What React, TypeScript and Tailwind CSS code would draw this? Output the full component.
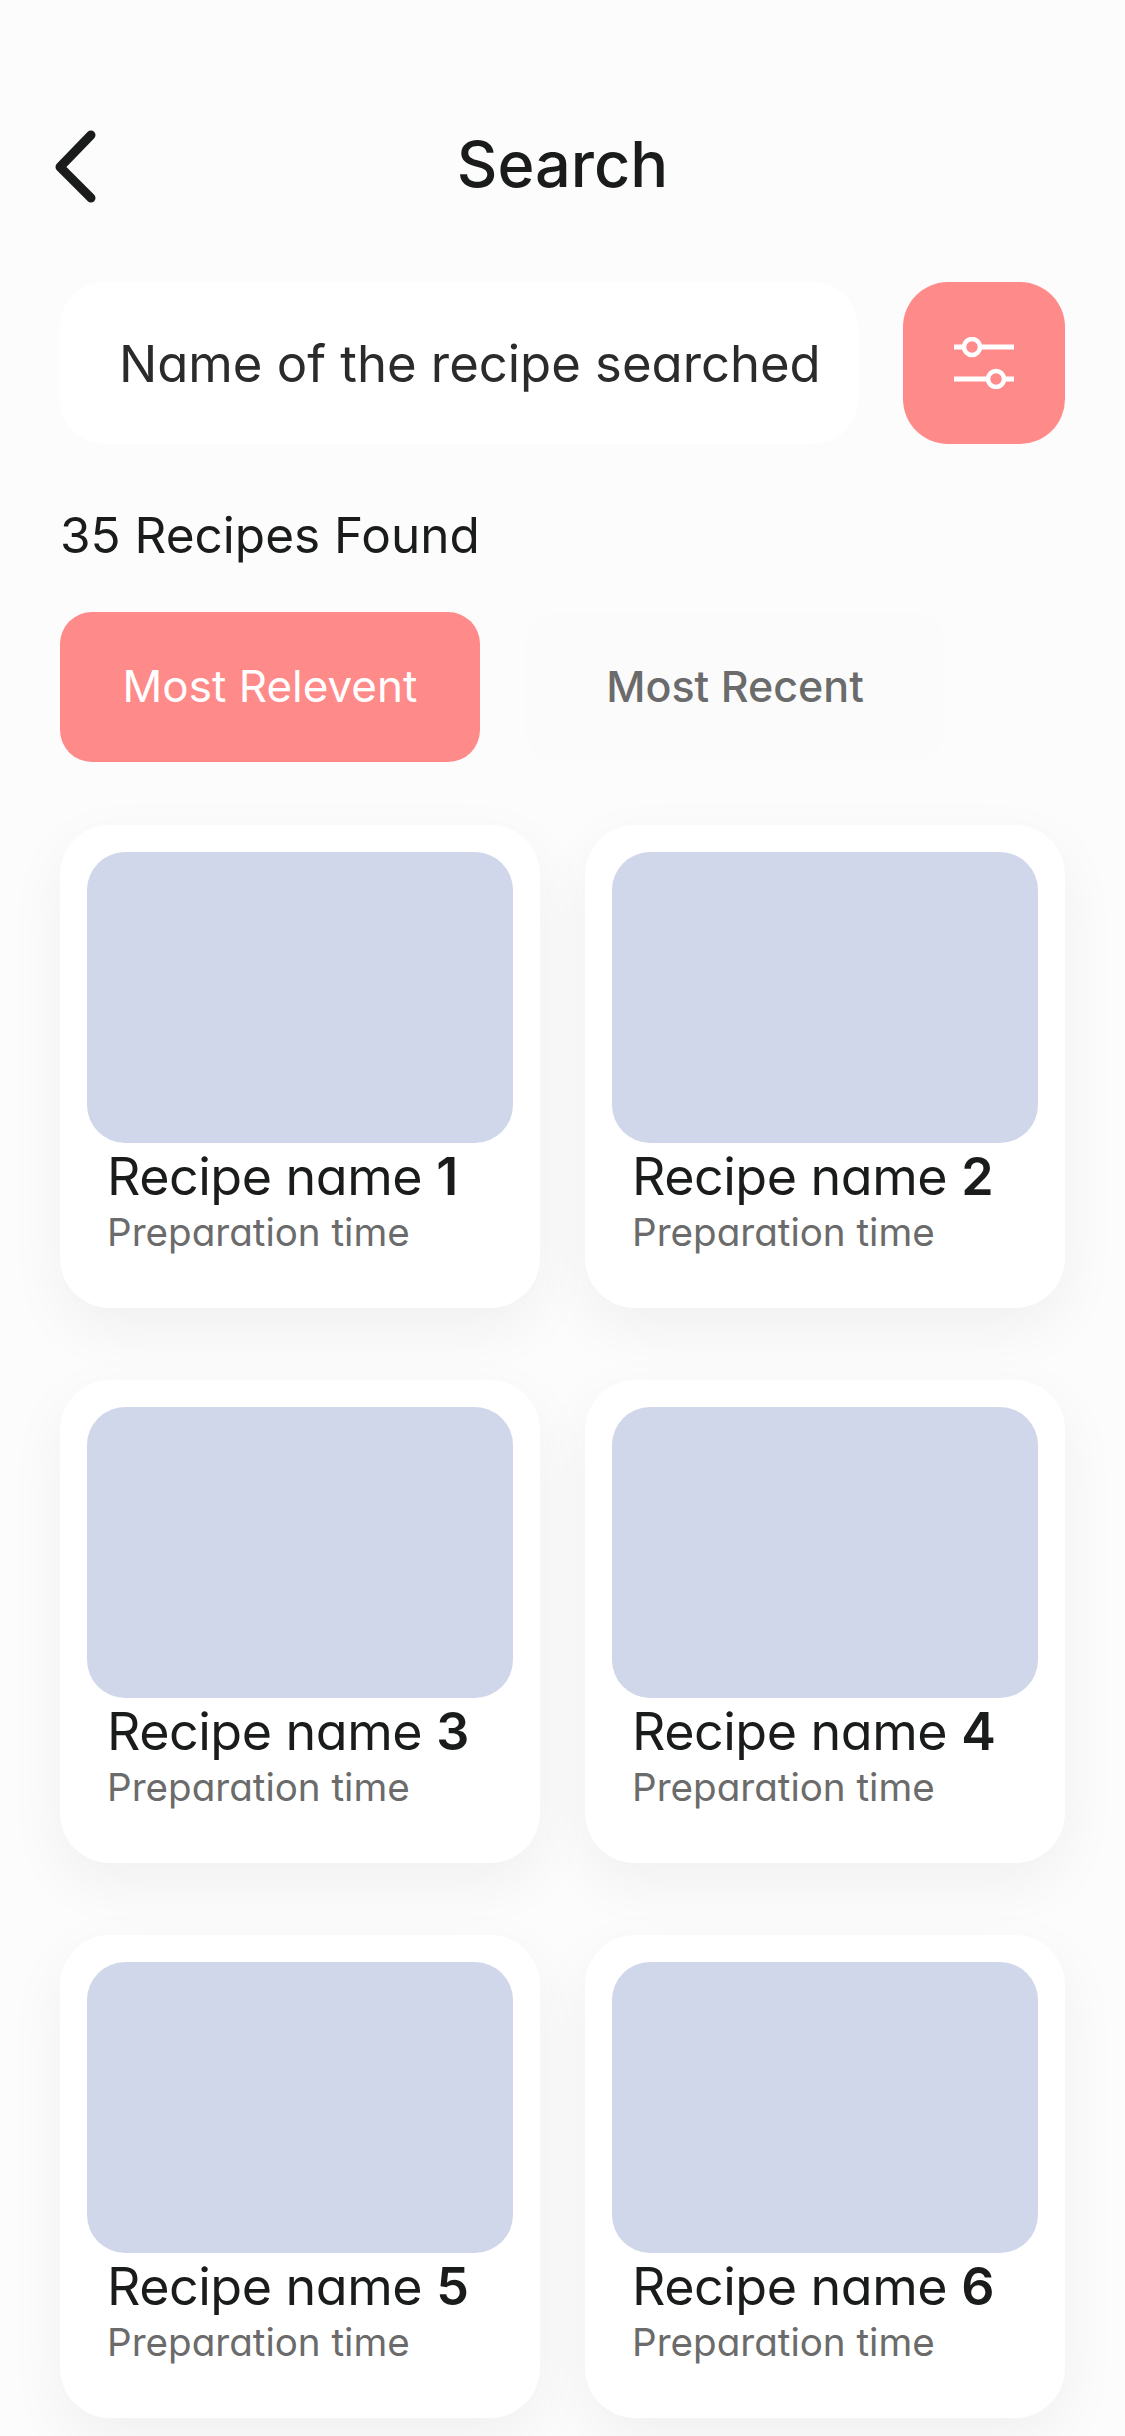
const recipes = [1, 2, 3, 4, 5, 6]

function BackIcon() {
  return (
    <svg width="46" height="76" viewBox="0 0 46 76" fill="none" className="block">
      <path d="M39 6 L8 38 L39 69" stroke="#1a1c1c" strokeWidth="9" strokeLinecap="round" strokeLinejoin="round" />
    </svg>
  )
}

function FilterIcon() {
  return (
    <svg width="60" height="52" viewBox="0 0 60 52" fill="none" className="block">
      <path d="M0 10H60M0 42H60" stroke="#fff" strokeWidth="5" />
      <circle cx="18" cy="10" r="8" fill="#ff8a8a" stroke="#fff" strokeWidth="4.5" />
      <circle cx="42" cy="42" r="8" fill="#ff8a8a" stroke="#fff" strokeWidth="4.5" />
    </svg>
  )
}

function RecipeCard({ n }: { n: number }) {
  return (
    <div className="h-[483px] rounded-[50px] bg-white p-[27px] shadow-[0_20px_60px_rgba(0,0,0,0.05)]">
      <div className="h-[291px] rounded-[38px] bg-[#d1d7ea]" />
      <div className="pl-[20px] pt-[4px]">
        <p className="text-[52px] leading-[60px] tracking-[-0.5px] text-[#1a1c1c] [font-feature-settings:'cv11']">
          Recipe name <span className="font-semibold">{n}</span>
        </p>
        <p className="mt-[-2px] text-[38.6px] leading-[54px] text-[#6b6b6b] [font-feature-settings:'cv11']">Preparation time</p>
      </div>
    </div>
  )
}

export default function App() {
  return (
    <div className="h-[2436px] w-[1125px] overflow-hidden bg-[#fcfcfc] font-['Inter',sans-serif]">
      <header className="relative flex h-[282px] items-start justify-center pt-[124px]">
        <div className="absolute left-[52px] top-[129px]">
          <BackIcon />
        </div>
        <h1 className="text-[63px] leading-[80px] font-medium text-[#1a1c1c]">Search</h1>
      </header>

      <div className="flex gap-[45px] px-[60px]">
        <div className="flex h-[162px] w-[798px] items-center rounded-[45px] bg-white pl-[59px] pt-[2px] text-[50.8px] text-[#2b2b2b] [font-feature-settings:'cv11']">
          Name of the recipe searched
        </div>
        <button className="flex h-[162px] w-[162px] items-center justify-center rounded-[45px] bg-[#ff8a8a]">
          <FilterIcon />
        </button>
      </div>

      <p className="px-[60px] pt-[56px] text-[49.5px] leading-[70px] text-[#1a1c1c]">35 Recipes Found</p>

      <div className="flex items-start gap-[45px] px-[60px] pt-[42px]">
        <div className="flex h-[150px] w-[420px] items-center justify-center rounded-[32px] bg-[#ff8a8a] pb-[2px] text-[44px] text-white">
          Most Relevent
        </div>
        <div className="flex h-[150px] w-[420px] items-center justify-center rounded-[32px] bg-[#fbfbfb] pb-[2px] text-[43px] font-medium text-[#6b6b6b]">
          Most Recent
        </div>
      </div>

      <div className="grid grid-cols-2 gap-x-[45px] gap-y-[72px] px-[60px] pt-[63px]">
        {recipes.map((n) => (
          <RecipeCard key={n} n={n} />
        ))}
      </div>
    </div>
  )
}
